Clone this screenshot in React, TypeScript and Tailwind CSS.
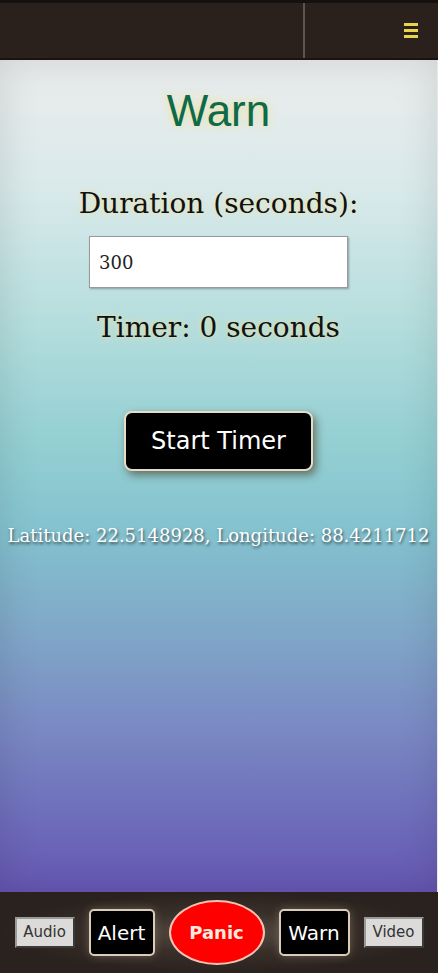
import { useState } from 'react';

const serif = "font-['DejaVu_Serif',serif]";

const NavBar = () => (
  <header className="flex h-[60px] shrink-0 border-t-[3px] border-b-2 border-t-[#16110e] border-b-[#1a1411] bg-[#2a211c]">
    <div className="w-[305px] border-r-2 border-r-[#5b5550]" />
    <div className="flex flex-1 items-center justify-end pr-[20px]">
      <span className="flex flex-col gap-[3px]">
        <span className="block h-[3px] w-[14px] bg-[#e6d54c]" />
        <span className="block h-[3px] w-[14px] bg-[#e6d54c]" />
        <span className="block h-[3px] w-[14px] bg-[#e6d54c]" />
      </span>
    </div>
  </header>
);

const SideButton = ({ label }: { label: string }) => (
  <button className="h-[31px] w-[60px] border-2 border-t-[#9a9a9a] border-l-[#9a9a9a] border-r-[#3a3a3a] border-b-[#3a3a3a] bg-[#dcdbd9] font-['DejaVu_Sans',sans-serif] text-[15px] text-[#333]">
    {label}
  </button>
);

const BlackButton = ({ label, w }: { label: string; w: string }) => (
  <button
    className={`h-[47px] ${w} rounded-[5px] border-2 border-[#d9cdb8] bg-black font-['DejaVu_Sans',sans-serif] text-[20px] text-white shadow-[0_0_10px_rgba(255,240,210,0.25)]`}
  >
    {label}
  </button>
);

export default function App() {
  const [duration, setDuration] = useState('300');

  return (
    <div className="flex h-screen flex-col overflow-hidden">
      <NavBar />
      <main className="relative flex flex-1 flex-col items-center border-r border-r-[#e8e8e8] bg-[linear-gradient(180deg,#ebeded_0%,#d8e9ea_16%,#b4dddd_32%,#96d0d3_45%,#84c3cf_56%,#80a9c8_68%,#7a8ac3_80%,#6d6bba_92%,#6656b3_100%)] shadow-[inset_0_0_40px_rgba(0,0,0,0.12)]">
        <h1 className="mt-[24px] font-['Liberation_Sans',sans-serif] text-[44px] leading-[54px] text-[#0d6a4a] [text-shadow:0_0_8px_#f3df8c]">
          Warn
        </h1>
        <label
          className={`mt-[48px] ${serif} text-[28px] leading-[36px] text-[#111] [text-shadow:0_0_6px_#f1e39a]`}
        >
          Duration (seconds):
        </label>
        <input
          value={duration}
          onChange={(e) => setDuration(e.target.value)}
          className={`mt-[14px] h-[52px] w-[259px] border border-[#9a9a9a] bg-white px-[9px] ${serif} text-[18px] text-[#222] shadow-[1px_1px_2px_rgba(0,0,0,0.3)] outline-none`}
        />
        <p className={`mt-[20px] ${serif} text-[28px] leading-[40px] text-[#111] [text-shadow:0_0_6px_#f1e39a]`}>
          Timer: 0 seconds
        </p>
        <button className="mt-[63px] h-[60px] w-[189px] rounded-[8px] border-2 border-[#e6dcc8] bg-black font-['DejaVu_Sans',sans-serif] text-[24px] text-white shadow-[3px_4px_8px_rgba(60,40,10,0.55)]">
          Start Timer
        </button>
        <p
          className={`mt-[53px] whitespace-nowrap ${serif} text-[18px] leading-[24px] text-white [text-shadow:1px_2px_3px_rgba(0,0,0,0.6)]`}
        >
          Latitude: 22.5148928, Longitude: 88.4211712
        </p>
      </main>
      <footer className="flex h-[81px] shrink-0 items-center justify-center gap-[14px] bg-[radial-gradient(ellipse_at_center,#5c5046_0%,#3a302a_35%,#2a221e_70%)]">
        <SideButton label="Audio" />
        <BlackButton label="Alert" w="w-[66px]" />
        <button className="h-[65px] w-[96px] rounded-[50%] border-2 border-[#f2c4b4] bg-[#ff0000] font-['DejaVu_Sans',sans-serif] text-[18px] font-bold text-[#fbe8de]">
          Panic
        </button>
        <BlackButton label="Warn" w="w-[71px]" />
        <SideButton label="Video" />
      </footer>
    </div>
  );
}
